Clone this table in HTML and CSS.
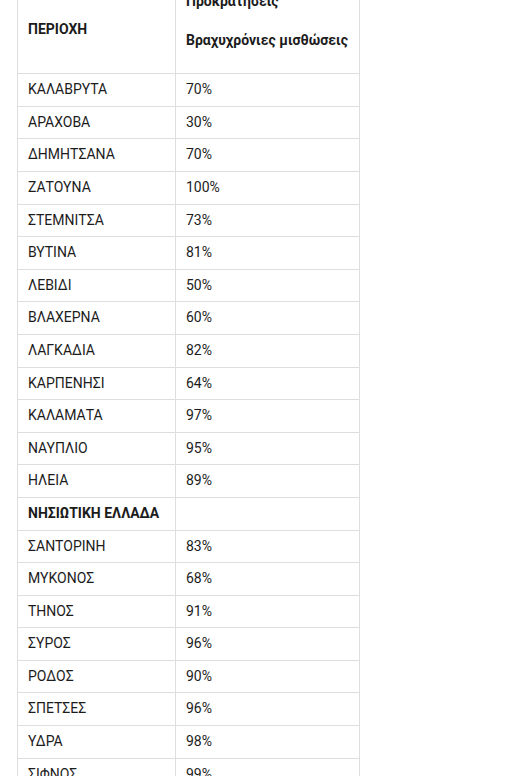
FILE: index.html
```html
<!DOCTYPE html>
<html lang="el">
<head>
<meta charset="utf-8">
<title>Πληρότητες</title>
<link rel="stylesheet" href="styles.css">
</head>
<body>
<table class="occ">
  <colgroup>
    <col class="col-area">
    <col class="col-val">
  </colgroup>
  <thead>
    <tr>
      <th>ΠΕΡΙΟΧΗ</th>
      <th>
        <p class="h1">Προκρατήσεις</p>
        <p class="h2">Βραχυχρόνιες μισθώσεις</p>
      </th>
    </tr>
  </thead>
  <tbody>
    <tr><td>ΚΑΛΑΒΡΥΤΑ</td><td>70%</td></tr>
    <tr><td>ΑΡΑΧΟΒΑ</td><td>30%</td></tr>
    <tr><td>ΔΗΜΗΤΣΑΝΑ</td><td>70%</td></tr>
    <tr><td>ΖΑΤΟΥΝΑ</td><td>100%</td></tr>
    <tr><td>ΣΤΕΜΝΙΤΣΑ</td><td>73%</td></tr>
    <tr><td>ΒΥΤΙΝΑ</td><td>81%</td></tr>
    <tr><td>ΛΕΒΙΔΙ</td><td>50%</td></tr>
    <tr><td>ΒΛΑΧΕΡΝΑ</td><td>60%</td></tr>
    <tr><td>ΛΑΓΚΑΔΙΑ</td><td>82%</td></tr>
    <tr><td>ΚΑΡΠΕΝΗΣΙ</td><td>64%</td></tr>
    <tr><td>ΚΑΛΑΜΑΤΑ</td><td>97%</td></tr>
    <tr><td>ΝΑΥΠΛΙΟ</td><td>95%</td></tr>
    <tr><td>ΗΛΕΙΑ</td><td>89%</td></tr>
    <tr><td class="group">ΝΗΣΙΩΤΙΚΗ ΕΛΛΑΔΑ</td><td></td></tr>
    <tr><td>ΣΑΝΤΟΡΙΝΗ</td><td>83%</td></tr>
    <tr><td>ΜΥΚΟΝΟΣ</td><td>68%</td></tr>
    <tr><td>ΤΗΝΟΣ</td><td>91%</td></tr>
    <tr><td>ΣΥΡΟΣ</td><td>96%</td></tr>
    <tr><td>ΡΟΔΟΣ</td><td>90%</td></tr>
    <tr><td>ΣΠΕΤΣΕΣ</td><td>96%</td></tr>
    <tr><td>ΥΔΡΑ</td><td>98%</td></tr>
    <tr><td>ΣΙΦΝΟΣ</td><td>99%</td></tr>
  </tbody>
</table>
</body>
</html>
```
FILE: styles.css
```css
html, body {
  margin: 0;
  padding: 0;
  background: #ffffff;
}
body {
  font-family: Roboto, "Noto Sans", sans-serif;
  font-size: 14px;
  line-height: 15.6px;
  color: #1c1c1c;
  overflow: hidden;
}
.occ {
  border-collapse: collapse;
  margin: -15px 0 0 17px;
  table-layout: fixed;
  width: 342px;
}
.occ .col-area { width: 158px; }
.occ .col-val { width: 184px; }
.occ th,
.occ td {
  border: 1px solid #dedede;
  padding: 8px 10px;
  text-align: left;
  font-weight: 400;
  vertical-align: middle;
}
.occ th {
  font-weight: 700;
  white-space: nowrap;
}
.occ th p {
  margin: 0;
}
.occ th .h2 {
  margin: 23px 0 17px;
}
.occ td.group {
  font-weight: 700;
}
```
